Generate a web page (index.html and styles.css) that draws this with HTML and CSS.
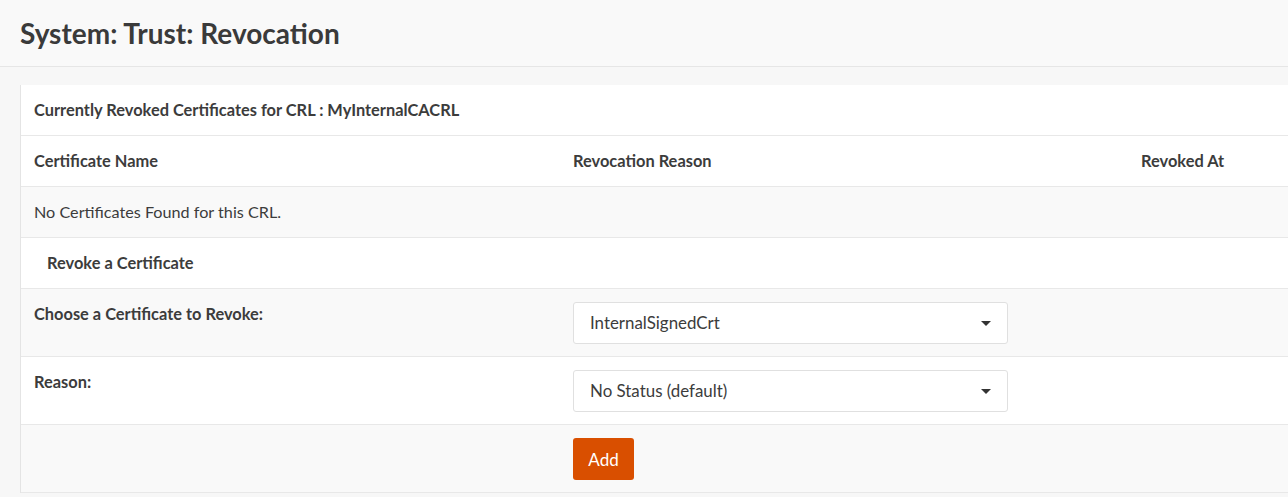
FILE: index.html
```html
<!DOCTYPE html>
<html>
<head>
<meta charset="utf-8">
<link rel="stylesheet" href="styles.css">
</head>
<body>
<header class="page-header">
  <h1 class="page-title">System: Trust: Revocation</h1>
</header>
<main class="content">
  <section class="card">
    <table class="crl-table">
      <colgroup>
        <col class="col-a">
        <col class="col-b">
        <col class="col-c">
      </colgroup>
      <tbody>
        <tr class="row-white">
          <td colspan="3" class="cell bold">Currently Revoked Certificates for CRL : MyInternalCACRL</td>
        </tr>
        <tr class="row-white">
          <td class="cell bold">Certificate Name</td>
          <td class="cell bold">Revocation Reason</td>
          <td class="cell bold">Revoked At</td>
        </tr>
        <tr class="row-gray">
          <td colspan="3" class="cell">No Certificates Found for this CRL.</td>
        </tr>
        <tr class="row-white">
          <td colspan="3" class="cell bold indent">Revoke a Certificate</td>
        </tr>
        <tr class="row-gray">
          <td class="cell bold top">Choose a Certificate to Revoke:</td>
          <td class="cell form-cell">
            <div class="select">
              <span class="select-text">InternalSignedCrt</span>
              <span class="caret"></span>
            </div>
          </td>
          <td class="cell"></td>
        </tr>
        <tr class="row-white">
          <td class="cell bold top">Reason:</td>
          <td class="cell form-cell">
            <div class="select">
              <span class="select-text">No Status (default)</span>
              <span class="caret"></span>
            </div>
          </td>
          <td class="cell"></td>
        </tr>
        <tr class="row-gray">
          <td class="cell"></td>
          <td class="cell form-cell"><button class="btn-add">Add</button></td>
          <td class="cell"></td>
        </tr>
      </tbody>
    </table>
  </section>
</main>
</body>
</html>
```

FILE: styles.css
```css
html, body {
  margin: 0;
  padding: 0;
  overflow: hidden;
}
body {
  background: #f7f7f7;
  font-family: "Lato", "Liberation Sans", sans-serif;
  color: #3c3c3c;
  width: 1288px;
}
.page-header {
  height: 66px;
  background: #f9f9f9;
  border-bottom: 1px solid #e6e6e6;
  display: flex;
  align-items: center;
  padding-left: 20px;
}
.page-title {
  margin: 0;
  font-size: 28px;
  font-weight: 700;
  color: #3a3a3a;
}
.content {
  padding: 18px 0 0 20px;
}
.card {
  width: 1320px;
  background: #fff;
  border-left: 1px solid #e4e4e4;
}
.crl-table {
  width: 100%;
  border-collapse: separate;
  border-spacing: 0;
  table-layout: fixed;
}
.col-a { width: 539px; }
.col-b { width: 568px; }
.col-c { width: auto; }
.row-white { background: #fff; }
.row-gray { background: #f9f9f9; }
.cell {
  height: 51px;
  box-sizing: border-box;
  border-bottom: 1px solid #e8e8e8;
  padding: 0 13px;
  font-size: 16.2px;
  line-height: 20px;
  vertical-align: middle;
}
.bold { font-weight: 700; font-size: 16.4px; }
.indent { padding-left: 26px; }
.top {
  vertical-align: top;
  padding-top: 15px;
}
.form-cell {
  height: 68px;
  padding-top: 13px;
  padding-bottom: 12px;
  vertical-align: top;
}
.select {
  width: 435px;
  height: 42px;
  box-sizing: border-box;
  background: #fff;
  border: 1px solid #e0e0e0;
  border-radius: 3px;
  display: flex;
  align-items: center;
  justify-content: space-between;
  padding: 0 16px;
}
.select-text {
  font-size: 16.9px;
  color: #3c3c3c;
}
.caret {
  width: 0;
  height: 0;
  border-left: 5px solid transparent;
  border-right: 5px solid transparent;
  border-top: 5px solid #333;
}
.btn-add {
  width: 61px;
  height: 42px;
  background: #d94f00;
  color: #fff;
  border: none;
  border-radius: 3px;
  font-family: inherit;
  font-size: 17px;
  padding: 0;
}
```
